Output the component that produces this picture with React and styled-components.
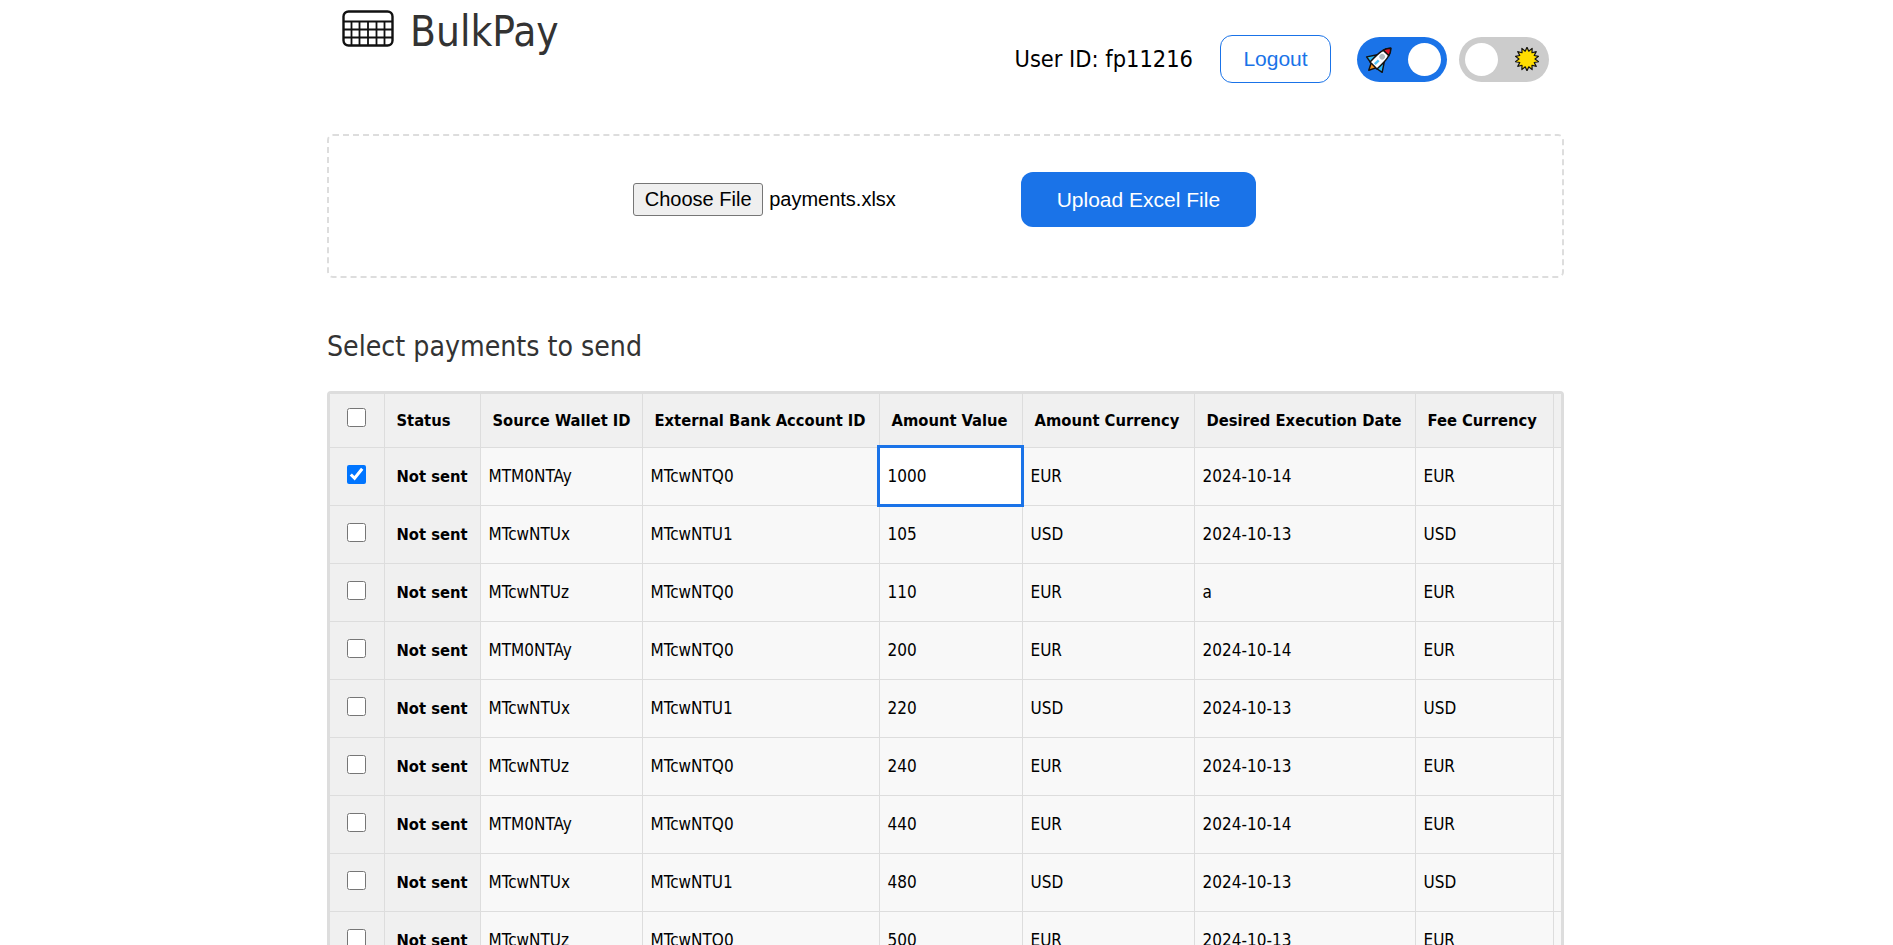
import React from 'react';
import styled, { createGlobalStyle } from 'styled-components';

const GlobalStyle = createGlobalStyle`
  html, body {
    margin: 0;
    padding: 0;
    height: 100%;
    overflow: hidden;
    background: #fff;
    font-family: "DejaVu Sans Condensed", "DejaVu Sans", sans-serif;
  }
  #root {
    padding-right: 2px;
  }
`;

const Page = styled.div`
  width: 1237px;
  margin: 0 auto;
`;

const Header = styled.header`
  display: flex;
  justify-content: space-between;
  align-items: flex-start;
  height: 134px;
  padding-right: 15px;
`;

const Brand = styled.div`
  display: flex;
  align-items: center;
  gap: 16px;
  padding: 0 0 0 15px;
`;

const Title = styled.h1`
  margin: 0;
  padding-top: 7px;
  font-size: 42px;
  font-weight: 400;
  color: #333;
`;

const Account = styled.div`
  display: flex;
  align-items: center;
  height: 48px;
  margin-top: 35px;
`;

const UserId = styled.span`
  font-size: 23.4px;
  color: #000;
  margin-right: 27px;
`;

const LogoutButton = styled.button`
  width: 111px;
  height: 48px;
  border: 1px solid #1a73e8;
  border-radius: 12px;
  background: #fff;
  color: #1a73e8;
  font: 21px "Liberation Sans", Arial, sans-serif;
  margin-right: 26px;
`;

const Toggle = styled.div`
  display: flex;
  flex-direction: ${(p) => (p.$on ? 'row' : 'row-reverse')};
  justify-content: space-between;
  align-items: center;
  box-sizing: border-box;
  width: 90px;
  height: 45px;
  padding: 0 ${(p) => (p.$on ? '6px' : '10px')} 0 ${(p) => (p.$on ? '11px' : '6px')};
  border-radius: 23px;
  background: ${(p) => (p.$on ? '#1a73e8' : '#ccc')};
  margin-left: ${(p) => (p.$on ? '0' : '12px')};
`;

const Knob = styled.span`
  width: 33px;
  height: 33px;
  border-radius: 50%;
  background: #fff;
`;

const UploadBox = styled.section`
  display: flex;
  justify-content: center;
  align-items: center;
  gap: 125px;
  box-sizing: border-box;
  height: 144px;
  border: 2px dashed #ddd;
  border-radius: 6px;
  padding: 0 2px 13px 0;
`;

const FilePicker = styled.div`
  display: flex;
  align-items: center;
  gap: 6px;
  font: 20px "Liberation Sans", Arial, sans-serif;
  color: #000;
`;

const ChooseButton = styled.button`
  width: 130px;
  height: 33px;
  padding: 0;
  border: 1px solid #767676;
  border-radius: 3px;
  background: #efefef;
  color: #000;
  font: 20px "Liberation Sans", Arial, sans-serif;
`;

const UploadButton = styled.button`
  width: 235px;
  height: 55px;
  border: none;
  border-radius: 12px;
  background: #1a73e8;
  color: #fff;
  font: 21px "Liberation Sans", Arial, sans-serif;
`;

const SectionTitle = styled.h2`
  margin: 51px 0 26px;
  font-size: 28.2px;
  line-height: 36px;
  font-weight: 400;
  color: #333;
`;

const TableFrame = styled.div`
  border: 3px solid #ddd;
  border-radius: 4px;
  overflow: hidden;
`;

const Table = styled.table`
  width: 1300px;
  table-layout: fixed;
  border-collapse: collapse;
  font-size: 17px;
  color: #000;
`;

const Col = styled.col`
  width: ${(p) => p.$w}px;
`;

const Th = styled.th`
  box-sizing: border-box;
  height: 53px;
  padding: 0 12px;
  text-align: left;
  font-size: 16.4px;
  font-weight: 700;
  white-space: nowrap;
  background: #f0f0f0;
  border: 1px solid #ddd;
  border-top: none;
  &:first-child {
    border-left: none;
    text-align: center;
    padding: 0 0 6px;
  }
`;

const Td = styled.td`
  box-sizing: border-box;
  height: 58px;
  padding: 0 8px;
  white-space: nowrap;
  background: ${(p) => (p.$focused ? '#fff' : '#f8f8f8')};
  border: 1px solid #ddd;
  outline: ${(p) => (p.$focused ? '3px solid #1a73e8' : 'none')};
  outline-offset: -1px;
  position: ${(p) => (p.$focused ? 'relative' : 'static')};
  &:first-child {
    border-left: none;
  }
`;

const StatusCell = styled(Td)`
  padding: 0 12px;
  font-size: 16.4px;
  font-weight: 700;
  background: #f0f0f0;
`;

const CheckCell = styled(Td)`
  padding: 0 0 4px;
  text-align: center;
  background: #f0f0f0;
`;

const Check = styled.input.attrs({ type: 'checkbox' })`
  width: 19px;
  height: 19px;
  margin: 0;
  vertical-align: middle;
`;

const columns = [
  { label: '', w: 54 },
  { label: 'Status', w: 96 },
  { label: 'Source Wallet ID', w: 162 },
  { label: 'External Bank Account ID', w: 237 },
  { label: 'Amount Value', w: 143 },
  { label: 'Amount Currency', w: 172 },
  { label: 'Desired Execution Date', w: 221 },
  { label: 'Fee Currency', w: 138 },
  { label: '', w: 77 },
];

const A = 'MTM0NTAy';
const X = 'MTcwNTUx';
const Z = 'MTcwNTUz';
const Q = 'MTcwNTQ0';
const U = 'MTcwNTU1';

const payments = [
  [A, Q, '1000', 'EUR', '2024-10-14', 'EUR'],
  [X, U, '105', 'USD', '2024-10-13', 'USD'],
  [Z, Q, '110', 'EUR', 'a', 'EUR'],
  [A, Q, '200', 'EUR', '2024-10-14', 'EUR'],
  [X, U, '220', 'USD', '2024-10-13', 'USD'],
  [Z, Q, '240', 'EUR', '2024-10-13', 'EUR'],
  [A, Q, '440', 'EUR', '2024-10-14', 'EUR'],
  [X, U, '480', 'USD', '2024-10-13', 'USD'],
  [Z, Q, '500', 'EUR', '2024-10-13', 'EUR'],
];

const GridLogo = () => (
  <svg width="52" height="37" viewBox="0 0 52 37" fill="none" stroke="#111" strokeWidth="1.8">
    <rect x="1.5" y="1.5" width="49" height="34" rx="5" strokeWidth="2.4" />
    <path d="M1.5 11.5H50.5M1.5 19.5H50.5M1.5 27.5H50.5" />
    <path d="M9.5 11.5V35.5M17.5 11.5V35.5M26 11.5V35.5M34.5 11.5V35.5M42.5 11.5V35.5" />
  </svg>
);

const RocketIcon = () => (
  <svg width="24" height="24" viewBox="0 0 24 24" overflow="visible">
    <g
      transform="translate(12 12) rotate(45) scale(1.22) translate(-12 -12)"
      stroke="#111"
      strokeWidth="1.2"
      strokeLinejoin="round"
    >
      <path d="M9 19L12 25L15 19Z" fill="#f7931e" />
      <path d="M8 11L3 18.5L8.5 19.5Z" fill="#29b6f6" />
      <path d="M16 11L21 18.5L15.5 19.5Z" fill="#29b6f6" />
      <path d="M12 -0.5C8 3.5 7.5 9 8 19.5H16C16.5 9 16 3.5 12 -0.5Z" fill="#fff" />
      <path d="M12 -0.5C10.3 1.1 9.3 2.9 8.7 5H15.3C14.7 2.9 13.7 1.1 12 -0.5Z" fill="#e0162b" />
      <circle cx="12" cy="9.5" r="2.3" fill="#b0b8be" stroke="none" />
      <path d="M12 13.5V18" stroke="#4fc3f7" strokeWidth="2" />
    </g>
  </svg>
);

const sunPoints = Array.from({ length: 28 }, (_, i) => {
  const r = i % 2 ? 8 : 11.8;
  const a = (i * Math.PI) / 14;
  return `${(12 + r * Math.sin(a)).toFixed(2)},${(12 - r * Math.cos(a)).toFixed(2)}`;
}).join(' ');

const SunIcon = () => (
  <svg width="24" height="24" viewBox="0 0 24 24">
    <polygon points={sunPoints} fill="#ffdd00" stroke="#111" strokeWidth="1.2" strokeLinejoin="round" />
  </svg>
);

export default function App() {
  return (
    <Page>
      <GlobalStyle />
      <Header>
        <Brand>
          <GridLogo />
          <Title>BulkPay</Title>
        </Brand>
        <Account>
          <UserId>User ID: fp11216</UserId>
          <LogoutButton>Logout</LogoutButton>
          <Toggle $on>
            <RocketIcon />
            <Knob />
          </Toggle>
          <Toggle>
            <SunIcon />
            <Knob />
          </Toggle>
        </Account>
      </Header>

      <UploadBox>
        <FilePicker>
          <ChooseButton>Choose File</ChooseButton>
          <span>payments.xlsx</span>
        </FilePicker>
        <UploadButton>Upload Excel File</UploadButton>
      </UploadBox>

      <SectionTitle>Select payments to send</SectionTitle>

      <TableFrame>
        <Table>
          <colgroup>
            {columns.map((c, i) => (
              <Col key={i} $w={c.w} />
            ))}
          </colgroup>
          <thead>
            <tr>
              <Th>
                <Check />
              </Th>
              {columns.slice(1).map((c, i) => (
                <Th key={i}>{c.label}</Th>
              ))}
            </tr>
          </thead>
          <tbody>
            {payments.map((row, r) => (
              <tr key={r}>
                <CheckCell>
                  <Check defaultChecked={r === 0} />
                </CheckCell>
                <StatusCell>Not sent</StatusCell>
                {row.map((value, c) => (
                  <Td key={c} $focused={r === 0 && c === 2}>
                    {value}
                  </Td>
                ))}
                <Td />
              </tr>
            ))}
          </tbody>
        </Table>
      </TableFrame>
    </Page>
  );
}
